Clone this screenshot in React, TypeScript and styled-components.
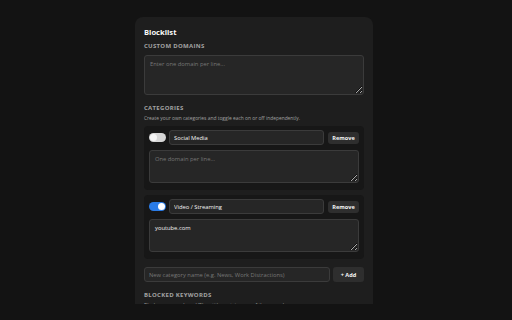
import styled, { createGlobalStyle } from 'styled-components';

const GlobalStyle = createGlobalStyle`
  html, body {
    margin: 0;
    background: #131313;
  }
  body {
    font-family: "Open Sans", "Noto Sans", sans-serif;
  }
`;

const Page = styled.div`
  display: flex;
  align-items: flex-start;
  justify-content: center;
  padding: 17px 4px 0 0;
  height: 304px;
  box-sizing: border-box;
  overflow: hidden;
`;

const Card = styled.div`
  display: flex;
  flex-direction: column;
  width: 238px;
  box-sizing: border-box;
  padding: 9px 9px 0;
  background: #1e1e1e;
  border-radius: 8px 8px 0 0;
  & > * {
    flex-shrink: 0;
  }
`;

const Title = styled.div`
  font-size: 7.6px;
  line-height: 12px;
  font-weight: 700;
  color: #fafafa;
`;

const Label = styled.div<{ $top: number }>`
  margin-top: ${(p) => p.$top}px;
  font-size: 6px;
  line-height: 9px;
  font-weight: 700;
  letter-spacing: 0.3px;
  text-transform: uppercase;
  color: #a3a3a3;
`;

const Hint = styled.div`
  margin-top: 1px;
  font-size: 4.9px;
  line-height: 8px;
  color: #a0a0a0;
`;

const Area = styled.textarea<{ $h: number; $top?: number }>`
  display: block;
  flex-shrink: 0;
  box-sizing: border-box;
  width: 100%;
  height: ${(p) => p.$h}px;
  margin: ${(p) => p.$top ?? 0}px 0 0;
  padding: 4px 5px;
  resize: vertical;
  background: #262626;
  border: 1px solid #3b3b3b;
  border-radius: 3px;
  color: #f2f2f2;
  font-family: inherit;
  font-size: 5.8px;
  line-height: 8px;
  outline: none;
  &::placeholder {
    color: #777777;
  }
`;

const Field = styled.input`
  flex: 1;
  min-width: 0;
  box-sizing: border-box;
  height: 15px;
  margin: 0;
  padding: 0 4px;
  background: #262626;
  border: 1px solid #3b3b3b;
  border-radius: 3px;
  color: #f5f5f5;
  font-family: inherit;
  font-size: 5.8px;
  outline: none;
  &::placeholder {
    color: #777777;
  }
`;

const Button = styled.button<{ $w: number; $h: number }>`
  flex: none;
  width: ${(p) => p.$w}px;
  height: ${(p) => p.$h}px;
  padding: 0;
  border: none;
  border-radius: 3px;
  background: #2e2e2e;
  color: #f5f5f5;
  font-family: inherit;
  font-size: 5.6px;
  font-weight: 700;
`;

const CategoryBox = styled.div<{ $top: number }>`
  display: flex;
  flex-direction: column;
  gap: 5px;
  margin-top: ${(p) => p.$top}px;
  padding: 4px 5px 7px;
  background: #171717;
  border-radius: 4px;
`;

const Row = styled.div`
  display: flex;
  align-items: center;
  gap: 3px;
`;

const Toggle = styled.div<{ $on: boolean }>`
  position: relative;
  flex: none;
  width: 17px;
  height: 9px;
  border-radius: 5px;
  background: ${(p) => (p.$on ? '#2a7be6' : '#d6d6d6')};
  &::after {
    content: '';
    position: absolute;
    top: 1px;
    left: ${(p) => (p.$on ? '9px' : '1px')};
    width: 7px;
    height: 7px;
    border-radius: 50%;
    background: ${(p) => (p.$on ? '#ffffff' : '#f4f4f4')};
  }
`;

const NameRow = styled(Row)`
  & > button {
    margin-left: 1px;
  }
`;

const AddRow = styled(Row)`
  margin-top: 8px;
`;

const categories = [
  { name: 'Social Media', on: false, domains: '' },
  { name: 'Video / Streaming', on: true, domains: 'youtube.com' },
];

export default function App() {
  return (
    <>
      <GlobalStyle />
      <Page>
        <Card>
          <Title>Blocklist</Title>
          <Label $top={4}>Custom Domains</Label>
          <Area $h={40} $top={4} placeholder="Enter one domain per line..." />
          <Label $top={9}>Categories</Label>
          <Hint>Create your own categories and toggle each on or off independently.</Hint>
          {categories.map((c, i) => (
            <CategoryBox key={c.name} $top={i === 0 ? 4 : 5}>
              <NameRow>
                <Toggle $on={c.on} />
                <Field defaultValue={c.name} />
                <Button $w={31} $h={12}>Remove</Button>
              </NameRow>
              <Area $h={33} placeholder="One domain per line..." defaultValue={c.domains} />
            </CategoryBox>
          ))}
          <AddRow>
            <Field placeholder="New category name (e.g. News, Work Distractions)" />
            <Button $w={31} $h={15}>+ Add</Button>
          </AddRow>
          <Label $top={9}>Blocked Keywords</Label>
          <Hint>Block any page whose URL or title contains one of these words.</Hint>
        </Card>
      </Page>
    </>
  );
}
